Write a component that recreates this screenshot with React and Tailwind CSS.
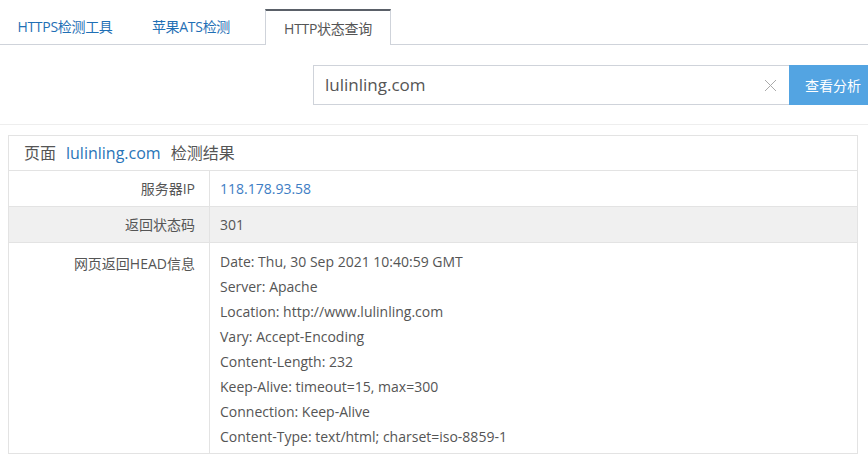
import React from 'react';

const headLines = [
  'Date: Thu, 30 Sep 2021 10:40:59 GMT',
  'Server: Apache',
  'Location: http://www.lulinling.com',
  'Vary: Accept-Encoding',
  'Content-Length: 232',
  'Keep-Alive: timeout=15, max=300',
  'Connection: Keep-Alive',
  'Content-Type: text/html; charset=iso-8859-1',
];

const font = { fontFamily: '"Open Sans", "Noto Sans CJK SC", sans-serif' };

export default function App() {
  return (
    <div className="w-[868px] h-[456px] bg-white overflow-hidden text-[#555]" style={font}>
      {/* Tabs */}
      <div className="flex items-end h-[45px] pt-[9px] border-b border-[#cfd3da]">
        <div className="w-[130px] h-[35px] flex items-center justify-center text-[14px] text-[#1f6fb5] tracking-[-0.3px]">HTTPS检测工具</div>
        <div className="w-[122px] h-[35px] flex items-center justify-center text-[14px] text-[#1f6fb5] tracking-[-0.3px]">苹果ATS检测</div>
        <div className="ml-[13px] w-[126px] h-[36px] -mb-px flex items-center justify-center text-[14px] text-[#555] bg-white border-t-2 border-t-[#5a6068] border-x border-x-[#cfd3da] tracking-[-0.3px]">
          HTTP状态查询
        </div>
      </div>

      {/* Search */}
      <div className="flex justify-end pt-[20px] h-[80px] border-b border-[#eeeeee]">
        <div className="flex h-[40px]">
          <div className="w-[476px] flex items-center border border-[#cfd3da] border-r-0 pl-[11px] pr-[12px]">
            <span className="flex-1 text-[17px] text-[#555]">lulinling.com</span>
            <svg width="13" height="13" viewBox="0 0 13 13" className="text-[#aaa]">
              <path d="M1 1 L12 12 M12 1 L1 12" stroke="currentColor" strokeWidth="1" fill="none" />
            </svg>
          </div>
          <div className="w-[79px] bg-[#53a4e2] text-white text-[14px] flex items-center pl-[16px]">查看分析</div>
        </div>
      </div>

      {/* Result table */}
      <div className="mx-[8px] mt-[10px] w-[850px] border border-[#e3e3e3] border-b-0">
        <div className="h-[35px] flex items-center pl-[15px] text-[16px] text-[#555] border-b border-[#e3e3e3]">
          页面<span className="ml-[10px] text-[#2a75b8]">lulinling.com</span>
          <span className="ml-[10px]">检测结果</span>
        </div>
        <div className="flex h-[36px] border-b border-[#e3e3e3] text-[14px]">
          <div className="w-[201px] flex items-center justify-end pr-[14px] border-r border-[#e3e3e3]">服务器IP</div>
          <div className="flex-1 flex items-center pl-[10px] text-[#3d7dc4]">118.178.93.58</div>
        </div>
        <div className="flex h-[36px] border-b border-[#e3e3e3] bg-[#f0f0f0] text-[14px]">
          <div className="w-[201px] flex items-center justify-end pr-[14px] border-r border-[#e3e3e3]">返回状态码</div>
          <div className="flex-1 flex items-center pl-[10px]">301</div>
        </div>
        <div className="flex h-[211px] border-b border-[#e3e3e3] text-[14px]">
          <div className="w-[201px] pt-[8px] leading-[25px] text-right pr-[14px] border-r border-[#e3e3e3]">网页返回HEAD信息</div>
          <div className="flex-1 pl-[10px] pt-[6px] leading-[25px]">
            {headLines.map((l) => (
              <div key={l}>{l}</div>
            ))}
          </div>
        </div>
      </div>
    </div>
  );
}
